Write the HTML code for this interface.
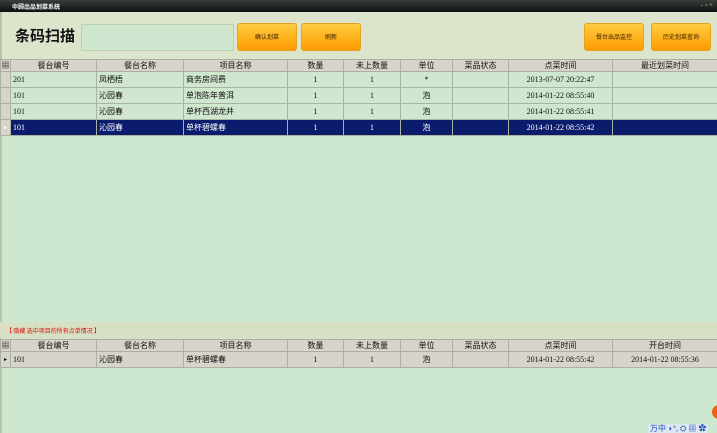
<!DOCTYPE html>
<html><head><meta charset="utf-8"><style>
*{margin:0;padding:0;box-sizing:border-box}
body{width:717px;height:433px;overflow:hidden;background:#d4dcc4;font-family:"Liberation Serif","Noto Sans CJK SC",serif;font-size:8px;color:#111;position:relative}
.title{position:absolute;left:0;top:0;width:717px;height:12px;background:linear-gradient(#3a3f3c,#0c0f0e);color:#fff;font-size:6px;padding:2px 0 0 12px;font-weight:bold;font-family:"Noto Sans CJK SC",sans-serif}
.top{position:absolute;left:0;top:12px;width:717px;height:47px;background:#dde4cc;border-left:2px solid #b8c4a8}
.lbl{position:absolute;left:13px;top:14px;font-size:15px;line-height:20px;font-family:"Noto Sans CJK SC",sans-serif;font-weight:bold;color:#111}
.inp{position:absolute;left:79px;top:12px;width:153px;height:27px;background:#cfe6cf;border:1px solid #c2d0b0}
.btn{position:absolute;top:11px;height:28px;width:60px;background:linear-gradient(#ffcc40,#ff9c00);border-radius:3px;border:1px solid #e8a020;font-size:6px;text-align:center;line-height:26px;font-family:"Noto Sans CJK SC",sans-serif;color:#331a00}
table{border-collapse:collapse;position:absolute;left:0;table-layout:fixed;width:717px}
td{border:1px solid #a8b4a0;height:16px;padding:0 2px;white-space:nowrap;overflow:hidden;font-size:8px}
tr.h td{background:#d8d4cc;height:12px;text-align:center;font-family:"Noto Sans CJK SC",sans-serif;font-size:8px;border-color:#b0aca4;line-height:10px}
.c{text-align:center}
tr.r td{background:#cfe6cf}
tr.s td{background:#0c1c6c;color:#fff}
tr.g td{background:#d8d4cc}
td.rh{background:#d8d4cc!important;color:#000;font-size:6px;padding:0;text-align:center}
.grid1{position:absolute;left:0;top:59px;width:717px;height:263px;background:#cde8cf;border-left:2px solid #b8c4a8}
.bar{position:absolute;left:0;top:322px;width:717px;height:16px;background:#d7dfc4;color:#e01010;font-size:6px;padding:4px 0 0 6px;font-family:"Noto Sans CJK SC",sans-serif}
.grid2{position:absolute;left:0;top:338px;width:717px;height:95px;background:#cde8cf;border-left:2px solid #b8c4a8}
.ime{position:absolute;left:648px;top:424px;font-size:8px;color:#2050c0;background:#dde8f0;height:9px;line-height:9px;padding:0 2px}
</style></head><body>
<div class="title">中顾出品划菜系统</div>
<div style="position:absolute;right:4px;top:1px;color:#8c8;font-size:7px">- ▫ ×</div>
<div class="top">
<div class="lbl">条码扫描</div>
<div class="inp"></div>
<div class="btn" style="left:235px">确认划菜</div>
<div class="btn" style="left:299px">刷新</div>
<div class="btn" style="left:582px">餐台出品监控</div>
<div class="btn" style="left:649px">历史划菜查询</div>
</div>
<div class="grid1"></div>
<table style="top:59px">
<colgroup><col style="width:10px"><col style="width:86px"><col style="width:87px"><col style="width:104px"><col style="width:56px"><col style="width:57px"><col style="width:52px"><col style="width:56px"><col style="width:104px"><col style="width:105px"></colgroup>
<tr class="h"><td class="rh">▦</td><td>餐台编号</td><td>餐台名称</td><td>项目名称</td><td>数量</td><td>未上数量</td><td>单位</td><td>菜品状态</td><td>点菜时间</td><td>最近划菜时间</td></tr>
<tr class="r"><td class="rh"></td><td>201</td><td>凤栖梧</td><td>商务房间费</td><td class="c">1</td><td class="c">1</td><td class="c">*</td><td></td><td class="c">2013-07-07 20:22:47</td><td></td></tr>
<tr class="r"><td class="rh"></td><td>101</td><td>沁园春</td><td>单泡陈年普洱</td><td class="c">1</td><td class="c">1</td><td class="c">泡</td><td></td><td class="c">2014-01-22 08:55:40</td><td></td></tr>
<tr class="r"><td class="rh"></td><td>101</td><td>沁园春</td><td>单杯西湖龙井</td><td class="c">1</td><td class="c">1</td><td class="c">泡</td><td></td><td class="c">2014-01-22 08:55:41</td><td></td></tr>
<tr class="s"><td class="rh">▸</td><td>101</td><td>沁园春</td><td>单杯碧螺春</td><td class="c">1</td><td class="c">1</td><td class="c">泡</td><td></td><td class="c">2014-01-22 08:55:42</td><td></td></tr>
</table>
<div class="bar">【 隐藏 选中项目的所有点单情况 】</div>
<div class="grid2"></div>
<table style="top:339px">
<colgroup><col style="width:10px"><col style="width:86px"><col style="width:87px"><col style="width:104px"><col style="width:56px"><col style="width:57px"><col style="width:52px"><col style="width:56px"><col style="width:104px"><col style="width:105px"></colgroup>
<tr class="h"><td class="rh">▦</td><td>餐台编号</td><td>餐台名称</td><td>项目名称</td><td>数量</td><td>未上数量</td><td>单位</td><td>菜品状态</td><td>点菜时间</td><td>开台时间</td></tr>
<tr class="g"><td class="rh">▸</td><td>101</td><td>沁园春</td><td>单杯碧螺春</td><td class="c">1</td><td class="c">1</td><td class="c">泡</td><td></td><td class="c">2014-01-22 08:55:42</td><td class="c">2014-01-22 08:55:36</td></tr>
</table>
<div style="position:absolute;left:712px;top:405px;width:14px;height:14px;border-radius:50%;background:#f06010"></div>
<div class="ime">万中 ◗°, ⛭ ▦ ✿</div>
</body></html>
